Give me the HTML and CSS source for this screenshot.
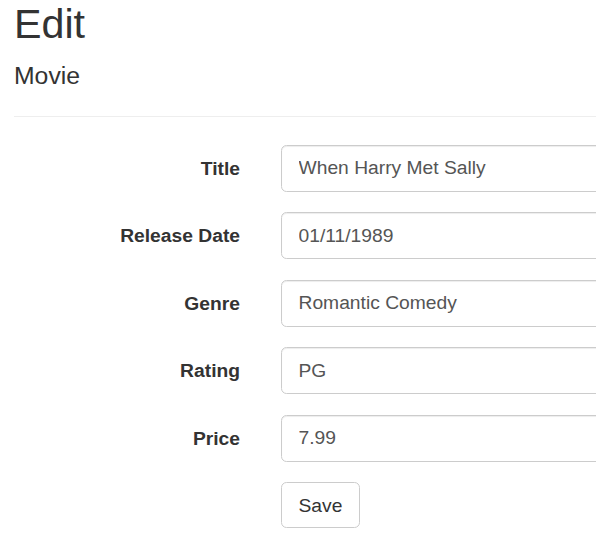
FILE: index.html
```html
<!DOCTYPE html>
<html>
<head>
<meta charset="utf-8">
<link rel="stylesheet" href="styles.css">
</head>
<body>
<main class="page">
  <h2 class="title">Edit</h2>
  <h4 class="subtitle">Movie</h4>
  <hr class="rule">
  <form class="form">
    <div class="group">
      <label class="label">Title</label>
      <div class="field"><input class="input" type="text" value="When Harry Met Sally"></div>
    </div>
    <div class="group">
      <label class="label">Release Date</label>
      <div class="field"><input class="input" type="text" value="01/11/1989"></div>
    </div>
    <div class="group">
      <label class="label">Genre</label>
      <div class="field"><input class="input" type="text" value="Romantic Comedy"></div>
    </div>
    <div class="group">
      <label class="label">Rating</label>
      <div class="field"><input class="input" type="text" value="PG"></div>
    </div>
    <div class="group">
      <label class="label">Price</label>
      <div class="field"><input class="input" type="text" value="7.99"></div>
    </div>
    <div class="group">
      <div class="label"></div>
      <div class="field"><button class="btn" type="button">Save</button></div>
    </div>
  </form>
</main>
</body>
</html>
```
FILE: styles.css
```css
html, body {
  margin: 0;
  padding: 0;
  overflow: hidden;
  background: #fff;
}
body {
  font-family: "Liberation Sans", Arial, sans-serif;
  font-size: 19.25px;
  line-height: 1.428571;
  color: #333;
}
.page {
  padding-left: 14px;
  padding-top: 2.3px;
  width: 900px;
}
.title {
  font-size: 41.25px;
  font-weight: 500;
  line-height: 1.1;
  margin: 0;
}
.subtitle {
  font-size: 24.75px;
  font-weight: 500;
  line-height: 1.1;
  margin: 14px 0 0 0;
}
.rule {
  margin: 27.5px 0 27.5px 0;
  border: 0;
  border-top: 1px solid #eee;
  height: 0;
}
.form {
  display: flex;
  flex-direction: column;
}
.group {
  display: flex;
  gap: 41px;
  margin-bottom: 20.75px;
}
.label {
  width: 226px;
  flex: none;
  text-align: right;
  font-weight: bold;
  padding-top: 9.625px;
  line-height: 27.5px;
}
.field {
  flex: 1;
}
.input {
  display: block;
  box-sizing: border-box;
  width: 500px;
  height: 46.75px;
  padding: 8.25px 16.5px;
  font-family: inherit;
  font-size: 19.25px;
  line-height: 27.5px;
  color: #555;
  background: #fff;
  border: 1px solid #ccc;
  border-radius: 5.5px;
  box-shadow: inset 0 1px 1px rgba(0,0,0,.075);
  margin: 0;
}
.btn {
  display: inline-block;
  box-sizing: border-box;
  padding: 8.25px 16.5px;
  font-family: inherit;
  font-size: 19.25px;
  line-height: 27.5px;
  color: #333;
  background: #fff;
  border: 1px solid #ccc;
  border-radius: 5.5px;
  margin: 0;
}
```
